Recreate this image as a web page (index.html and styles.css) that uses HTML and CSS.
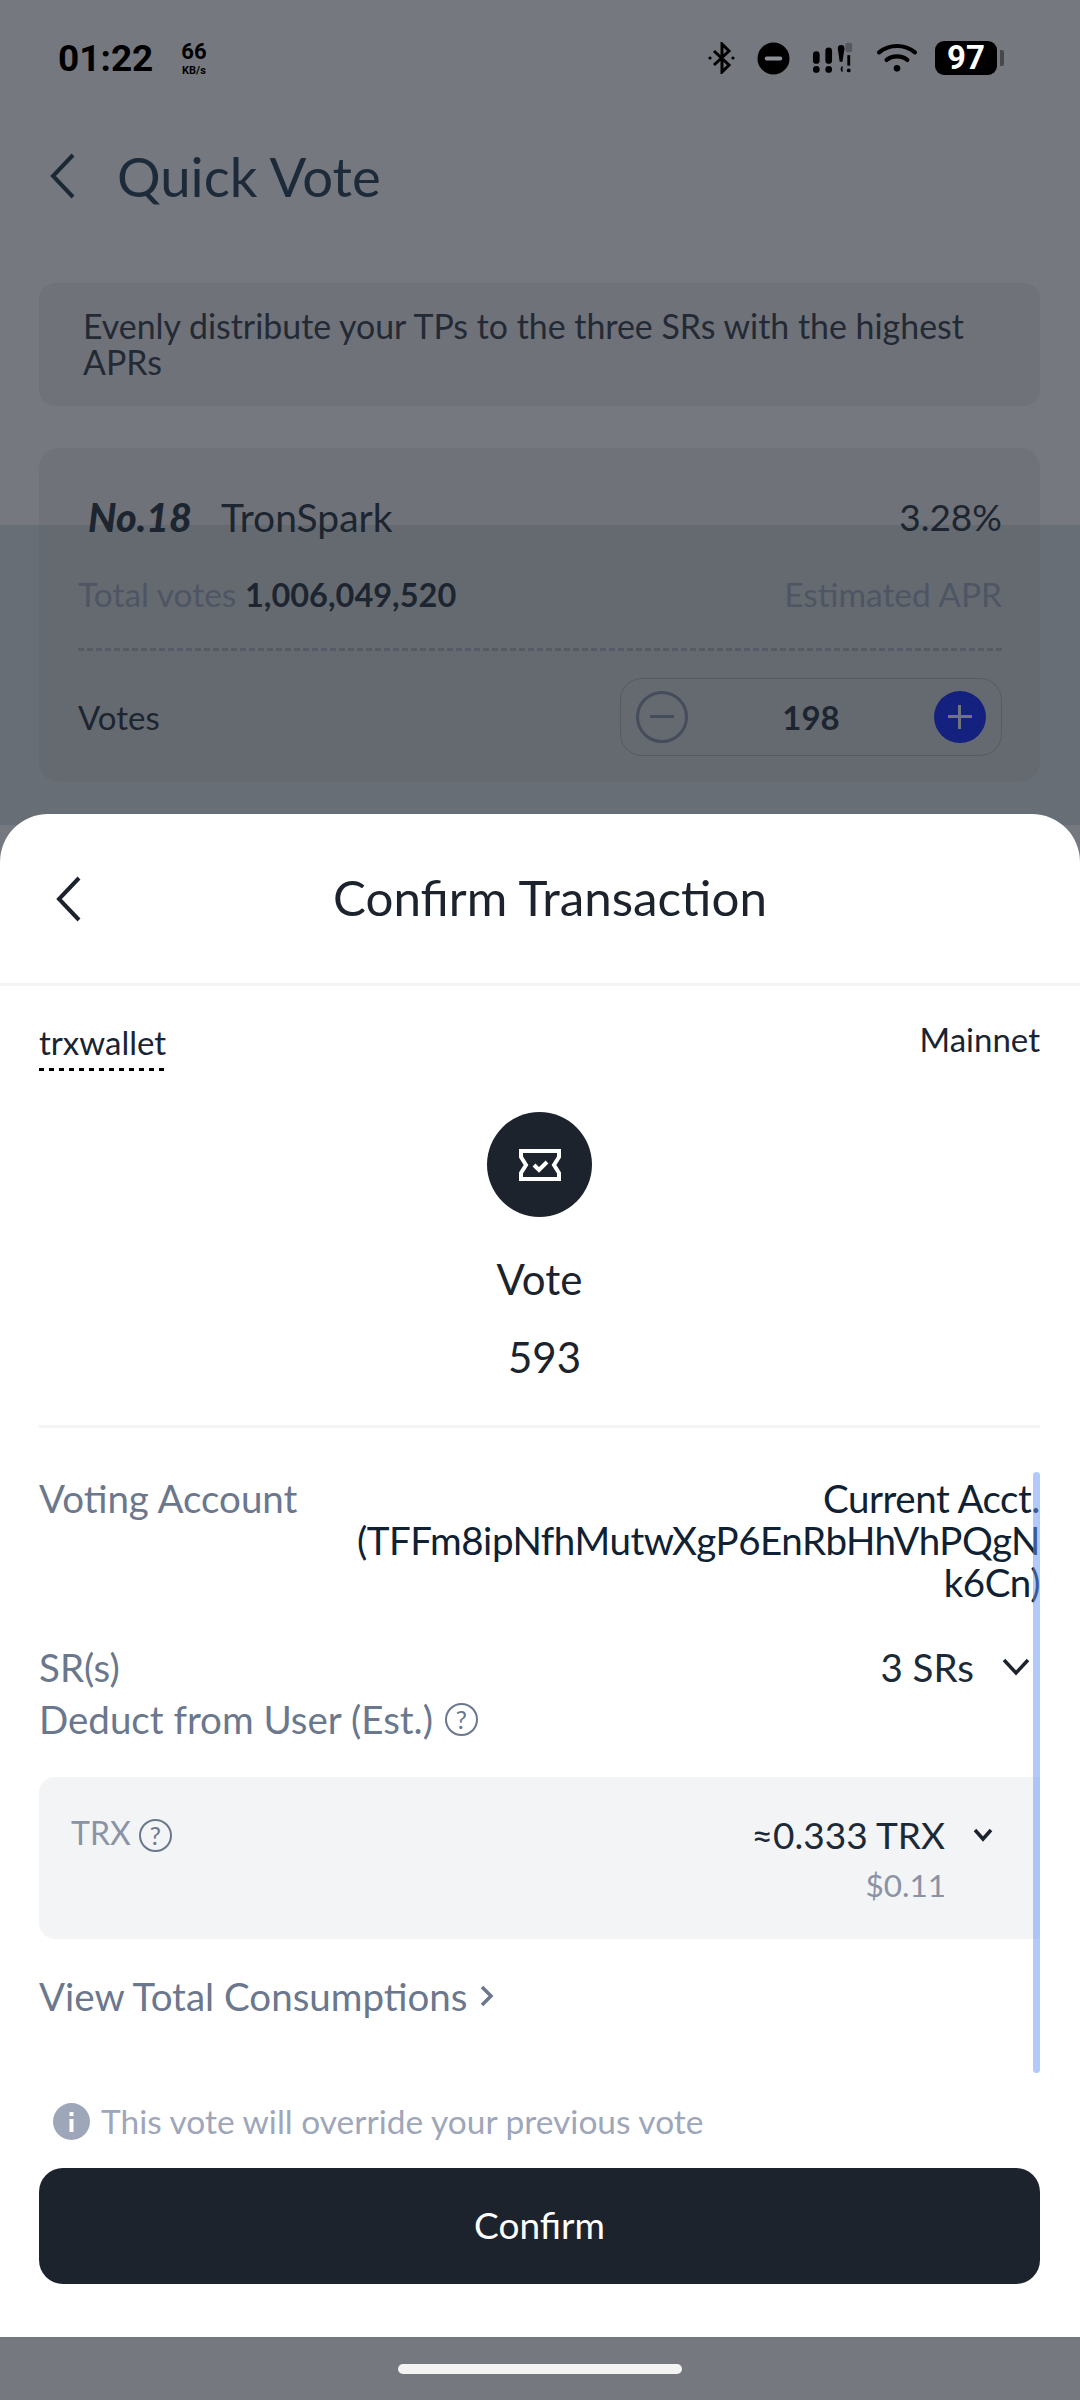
FILE: index.html
```html
<!DOCTYPE html>
<html>

	<head>
		<title>Quick Vote</title>
		<meta charset="utf-8">
		<link rel="stylesheet" href="styles.css">
	</head>

	<body>
		<div class="phone">
			<div class="band"></div>

			<div class="status">
				<div class="status-left">
					<span class="clock">01:22</span>
					<span class="speed"><b>66</b><i>KB/s</i></span>
				</div>
				<div class="status-right">
					<svg width="27" height="32" viewBox="0 0 27 32" fill="none" stroke="#000" stroke-width="3"><path d="M6 9l15 14-7 7V2l7 7L6 23"/><circle cx="2" cy="16" r="1.600" fill="#000" stroke="none"/><circle cx="25" cy="16" r="1.600" fill="#000" stroke="none"/></svg>
					<svg width="33" height="33" viewBox="0 0 34 34"><circle cx="17" cy="17" r="16.500" fill="#000"/><rect x="8" y="15" width="18" height="4" rx="2" fill="#8d9096"/></svg>
					<svg width="42" height="32" viewBox="0 0 44 32" fill="#000"><rect x="1" y="9" width="7" height="13" rx="3.500"/><rect x="14" y="5" width="7" height="17" rx="3.500"/><path d="M27 6a3.500 3.500 0 0 1 7 0l-2 14h-3z"/><rect x="35" y="0" width="7" height="10" rx="2" fill="#55585e"/><rect x="37" y="13" width="3" height="11"/><circle cx="4.500" cy="28" r="3.500"/><circle cx="17.500" cy="28" r="3.500"/><path d="M32 24a4 4 0 0 0 0 7z"/><circle cx="38.500" cy="29" r="2"/></svg>
					<svg width="42" height="32" viewBox="0 0 44 34" fill="none" stroke="#000" stroke-width="4.500" stroke-linecap="round"><path d="M3 11c11-9 27-9 38 0"/><path d="M11 19c6-5 16-5 22 0"/><circle cx="22" cy="28" r="3.500" fill="#000" stroke="none"/></svg>
					<div class="battery"><span class="battery-level">97</span><span class="battery-cap"></span></div>
				</div>
			</div>

			<div class="page-head">
				<svg width="30" height="46" viewBox="0 0 30 46" fill="none" stroke="#1d2835" stroke-width="4"><path d="M26 2L6 23l20 21"/></svg>
				<h1>Quick Vote</h1>
			</div>

			<div class="notice">Evenly distribute your TPs to the three SRs with the highest APRs</div>

			<div class="card">
				<div class="card-row top-row">
					<div><b class="rank">No.18</b><span class="name">TronSpark</span></div>
					<span class="rate">3.28%</span>
				</div>
				<div class="card-row info-row">
					<div><span class="muted">Total votes</span> <span class="total">1,006,049,520</span></div>
					<span class="muted">Estimated APR</span>
				</div>
				<div class="dashes"></div>
				<div class="card-row votes-row">
					<span class="votes-label">Votes</span>
					<div class="stepper">
						<span class="step minus"><i></i></span>
						<b class="count">198</b>
						<span class="step plus"><i></i><u></u></span>
					</div>
				</div>
			</div>

			<div class="sheet">
				<div class="sheet-head">
					<svg class="sheet-back" width="30" height="46" viewBox="0 0 30 46" fill="none" stroke="#1c232d" stroke-width="4"><path d="M26 2L6 23l20 21"/></svg>
					<h2>Confirm Transaction</h2>
				</div>

				<div class="sheet-body">
					<div class="wallet-row">
						<span class="wallet">trxwallet</span>
						<span class="network">Mainnet</span>
					</div>

					<div class="summary">
						<div class="vote-icon">
							<svg width="42" height="32" viewBox="0 0 42 32" fill="none" stroke="#fff"><path d="M2 2h38v6l-5 8 5 8v6H2v-6l5-8-5-8z" stroke-width="4"/><path d="M15 16l5 5 8-8" stroke-width="4"/></svg>
						</div>
						<div class="summary-title">Vote</div>
						<div class="summary-num">593</div>
					</div>

					<div class="details">
						<div class="scrollbar"></div>
						<div class="detail acct">
							<span class="label">Voting Account</span>
							<span class="value">Current Acct. (TFFm8ipNfhMutwXgP6EnRbHhVhPQgNk6Cn)</span>
						</div>
						<div class="detail srs">
							<span class="label">SR(s)</span>
							<span class="value-inline">3 SRs
								<svg width="28" height="18" viewBox="0 0 28 18" fill="none" stroke="#1c232d" stroke-width="3.500"><path d="M2 2l12 13L26 2"/></svg>
							</span>
						</div>
						<div class="detail deduct">
							<span class="label">Deduct from User (Est.)</span>
							<span class="help">?</span>
						</div>
						<div class="fee">
							<div class="fee-name">TRX <span class="help">?</span></div>
							<div class="fee-right">
								<div class="fee-amount">≈0.333 TRX
									<svg width="20" height="14" viewBox="0 0 20 14" fill="none" stroke="#1c232d" stroke-width="3.500"><path d="M2 2l8 9 8-9"/></svg>
								</div>
								<div class="fee-usd">$0.11</div>
							</div>
						</div>
						<div class="consume">View Total Consumptions
							<svg width="16" height="22" viewBox="0 0 16 22" fill="none" stroke="#6b778d" stroke-width="3.500"><path d="M3 2l9 9-9 9"/></svg>
						</div>
					</div>

					<div class="warn">
						<svg width="37" height="37" viewBox="0 0 37 37"><circle cx="18.500" cy="18.500" r="18.500" fill="#9ea6ba"/><rect x="16.500" y="16" width="4" height="13" fill="#fff"/><rect x="16.500" y="9" width="4" height="4" fill="#fff"/></svg>
						<span>This vote will override your previous vote</span>
					</div>
					<div class="confirm">Confirm</div>
				</div>
			</div>

			<div class="home-bar"><span></span></div>
		</div>
	</body>

</html>
```

FILE: styles.css
```css
html,body {
	margin: 0;
	padding: 0;
}

body {
	width: 1080px;
	height: 2400px;
	overflow: hidden;
	font-family: Lato, 'Noto Sans', sans-serif;
	color: #1c2530;
}

.phone {
	position: relative;
	width: 1080px;
	height: 2400px;
	background: #75787f;
	overflow: hidden;
}

/* darker part of the page behind the dim layer */
.band {
	position: absolute;
	left: 0;
	top: 525px;
	width: 100%;
	height: 300px;
	background: #686e75;
}

.status {
	position: relative;
	display: flex;
	justify-content: space-between;
	align-items: center;
	height: 34px;
	padding: 41px 78px 0 58px;
}

.status-left {
	display: flex;
	align-items: center;
	gap: 28px;
}

.clock {
	font: bold 37px 'Roboto', sans-serif;
	color: #000;
}

.speed {
	display: flex;
	flex-direction: column;
	align-items: center;
	color: #000;
	font-family: 'Roboto', sans-serif;
}

.speed b {
	font-size: 22px;
	line-height: 24px;
}

.speed i {
	font-size: 11px;
	font-style: normal;
	font-weight: bold;
	line-height: 13px;
}

.status-right {
	display: flex;
	align-items: center;
	gap: 22px;
}

.battery {
	display: flex;
	align-items: center;
	gap: 3px;
	margin-left: -5px;
	margin-right: -2px;
}

.battery-level {
	width: 62px;
	height: 34px;
	border-radius: 9px;
	background: #000;
	color: #fff;
	text-align: center;
	font: bold 33px/34px 'Roboto', sans-serif;
}

.battery-cap {
	width: 4px;
	height: 16px;
	background: #45484d;
	border-radius: 0 2px 2px 0;
}

.page-head {
	position: relative;
	display: flex;
	align-items: center;
	gap: 40px;
	height: 60px;
	margin-top: 71px;
	padding-left: 47px;
}

.page-head h1 {
	margin: 0;
	font-size: 54.500px;
	font-weight: 400;
	color: #1d2a39;
}

.notice {
	position: relative;
	margin: 77px 40px 0 39px;
	padding: 25px 40px 23px 44px;
	height: 75px;
	background: #6f7279;
	border-radius: 16px;
	font-size: 33.900px;
	line-height: 36px;
	color: #232a35;
}

.card {
	position: relative;
	margin: 42px 40px 0 39px;
	height: 334px;
	padding: 0 38px 0 39px;
	box-sizing: border-box;
	border-radius: 20px;
	background: rgba(90,95,100,.22);
}

.card-row {
	display: flex;
	justify-content: space-between;
	align-items: center;
}

.top-row {
	padding-top: 44px;
	height: 48px;
}

.rank {
	font-size: 39.500px;
	font-style: italic;
	font-weight: 900;
	margin-left: 10px;
	margin-right: 29px;
}

.name {
	font-size: 39px;
}

.rate {
	font-size: 37px;
}

.info-row {
	margin-top: 32px;
	height: 44px;
	font-size: 33.500px;
}

.muted {
	color: #4e5563;
}

.total {
	font-weight: 700;
	color: #1c2530;
	font-size: 32.500px;
}

.dashes {
	margin-top: 32px;
	border-top: 3px dashed #555b65;
}

.votes-row {
	margin-top: 27px;
}

.votes-label {
	font-size: 33px;
}

.stepper {
	display: flex;
	justify-content: space-between;
	align-items: center;
	width: 382px;
	height: 78px;
	box-sizing: border-box;
	padding: 0 15px;
	border: 1px solid #555b65;
	border-radius: 22px;
}

.count {
	font-size: 33px;
}

.step {
	position: relative;
	width: 52px;
	height: 52px;
	box-sizing: border-box;
	border-radius: 50%;
}

.minus {
	border: 3px solid #454d5a;
}

.plus {
	background: #15217f;
}

.step i {
	position: absolute;
	left: 14px;
	top: 24px;
	width: 24px;
	height: 3px;
	background: #70757c;
}

.minus i {
	left: 11px;
	top: 21px;
	background: #454d5a;
}

.step u {
	position: absolute;
	left: 24px;
	top: 14px;
	width: 3px;
	height: 24px;
	background: #70757c;
}

/* bottom sheet */
.sheet {
	position: absolute;
	left: 0;
	top: 814px;
	width: 1080px;
	height: 1523px;
	background: #fff;
	border-radius: 48px 48px 0 0;
}

.sheet-head {
	position: relative;
	height: 172px;
	border-bottom: 3px solid #f3f3f4;
	display: flex;
	justify-content: center;
	align-items: center;
	box-sizing: border-box;
	padding: 0 0 0 20px;
}

.sheet-back {
	position: absolute;
	left: 53px;
	top: 62px;
}

.sheet-head h2 {
	margin: 0 0 4px 0;
	font-size: 49.300px;
	font-weight: 400;
	color: #1c232d;
}

.sheet-body {
	padding: 0 40px 0 39px;
}

.wallet-row {
	display: flex;
	justify-content: space-between;
	padding-top: 33px;
	font-size: 33px;
	color: #182433;
}

.wallet {
	display: block;
	padding-bottom: 9px;
	margin-top: -1px;
	padding-top: 4px;
	height: 40px;
	width: 125px;
	background: repeating-linear-gradient(90deg,#000 0 5px,transparent 5px 10px) left bottom / 100% 3px no-repeat;
}

.summary {
	display: flex;
	flex-direction: column;
	align-items: center;
	border-bottom: 3px solid #f3f3f4;
	padding-bottom: 46px;
	height: 267px;
	margin-top: 41px;
}

.vote-icon {
	display: flex;
	justify-content: center;
	align-items: center;
	flex-shrink: 0;
	width: 105px;
	height: 105px;
	border-radius: 50%;
	background: #1c232d;
}

.summary-title {
	margin-top: 37px;
	font-size: 42px;
	line-height: 50px;
	color: #1c232d;
}

.summary-num {
	margin-top: 28px;
	margin-left: 10px;
	font-size: 42px;
	line-height: 50px;
	color: #1c232d;
}

.details {
	position: relative;
	font-size: 38.500px;
	padding-top: 49px;
}

.scrollbar {
	position: absolute;
	right: 0;
	top: 44px;
	width: 7px;
	height: 601px;
	border-radius: 4px;
	background: rgba(100,150,245,.5);
}

.detail {
	display: flex;
	justify-content: space-between;
	align-items: flex-start;
}

.label {
	color: #6b778d;
	line-height: 42px;
}

.value {
	width: 690px;
	text-align: right;
	overflow-wrap: anywhere;
	line-height: 42px;
	letter-spacing: -.45px;
	color: #0f2133;
}

.srs {
	margin-top: 43px;
}

.value-inline {
	display: flex;
	align-items: center;
	gap: 28px;
	line-height: 42px;
	padding-right: 10px;
	color: #1c2a38;
}

.deduct {
	justify-content: flex-start;
	align-items: center;
	gap: 12px;
	margin-top: 10px;
}

.help {
	display: inline-block;
	width: 33px;
	height: 33px;
	box-sizing: border-box;
	border: 2.500px solid #6b778d;
	border-radius: 50%;
	color: #6b778d;
	font-size: 25px;
	line-height: 28px;
	text-align: center;
}

.fee {
	display: flex;
	justify-content: space-between;
	height: 162px;
	box-sizing: border-box;
	margin-top: 37px;
	padding: 36px 47px 0 32px;
	background: #f3f4f6;
	border-radius: 16px 0 0 16px;
}

.fee-name {
	font-size: 32px;
	line-height: 40px;
	color: #8a93a5;
}

.fee-right {
	text-align: right;
}

.fee-amount {
	display: flex;
	align-items: center;
	gap: 28px;
	font-size: 37px;
	line-height: 44px;
	color: #1c2a38;
}

.fee-usd {
	margin-top: 8px;
	margin-right: 47px;
	font-size: 31.500px;
	line-height: 40px;
	color: #8a93a5;
}

.consume {
	display: flex;
	align-items: center;
	gap: 12px;
	margin-top: 35px;
	line-height: 44px;
	color: #6b778d;
}

.warn {
	display: flex;
	align-items: center;
	gap: 11px;
	padding-left: 14px;
	margin-top: 83px;
	font-size: 33.500px;
	line-height: 40px;
	color: #9ea6ba;
}

.confirm {
	height: 116px;
	margin-top: 27px;
	line-height: 113px;
	text-align: center;
	font-size: 37px;
	color: #fff;
	background: #1c232d;
	border-radius: 24px;
}

.home-bar {
	position: absolute;
	left: 0;
	bottom: 0;
	width: 100%;
	height: 63px;
	display: flex;
	justify-content: center;
}

.home-bar span {
	display: block;
	width: 284px;
	height: 10px;
	margin-top: 27px;
	border-radius: 5px;
	background: #f3f3f3;
}
```
